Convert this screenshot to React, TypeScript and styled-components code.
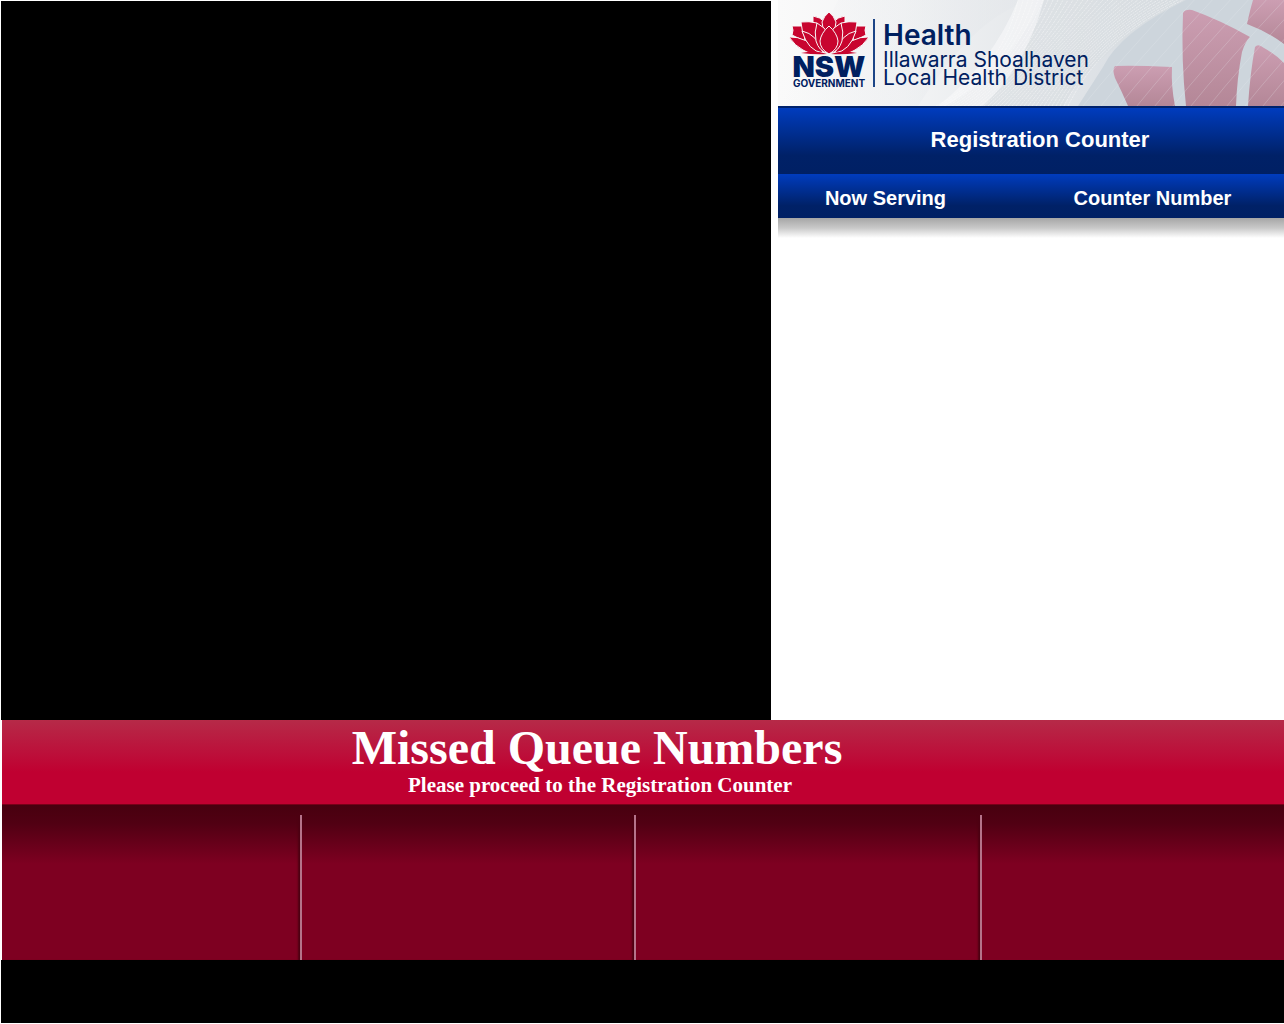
import React from "react";
import styled, { createGlobalStyle } from "styled-components";

const GlobalStyle = createGlobalStyle`
  *, *::before, *::after { box-sizing: border-box; }
  body { margin: 0; background: #fff; }
  h1, h2, p { margin: 0; }
`;

const Page = styled.div`
  min-height: 100vh;
  display: flex;
  flex-direction: column;
  padding: 1px 0 1px 1px;
`;

const Upper = styled.main`
  display: grid;
  grid-template-columns: 770fr 506fr;
  column-gap: 7px;
  flex: 1 0 auto;
`;

const VideoPanel = styled.section`
  background: #000;
`;

const Board = styled.section`
  display: flex;
  flex-direction: column;
  margin-top: -1px;
`;

const Banner = styled.header`
  position: relative;
  display: flex;
  align-items: flex-start;
  height: 106px;
  padding: 12px 0 0 11px;
  overflow: hidden;
  color: #002060;
  font-family: Inter, "Liberation Sans", sans-serif;
  background: #eef0f2;
`;

const BannerArt = styled.svg`
  position: absolute;
  inset: 0;
  width: 100%;
  height: 100%;
`;

const Emblem = styled.div`
  position: relative;
  display: flex;
  flex-direction: column;
  align-items: center;
  width: 80px;
`;

const Flower = styled.svg`
  display: block;
  width: 80px;
  height: 43px;
`;

const StateName = styled.span`
  font-size: 29px;
  font-weight: 900;
  line-height: 24px;
`;

const StateLabel = styled.span`
  font-size: 10px;
  font-weight: 700;
  line-height: 8px;
`;

const District = styled.div`
  position: relative;
  margin: 7px 0 0 4px;
  padding-left: 8px;
  height: 68px;
  border-left: 2px solid #1c4587;
`;

const DistrictName = styled.h1`
  font-size: 28px;
  font-weight: 600;
  line-height: 32px;
`;

const DistrictLine = styled.p`
  font-size: 21px;
  font-weight: 400;
  line-height: 18px;
  white-space: nowrap;
`;

const BlueBar = styled.div<{ $tall?: boolean }>`
  display: grid;
  grid-auto-flow: column;
  grid-auto-columns: 1fr;
  align-items: center;
  justify-items: center;
  height: ${(p) => (p.$tall ? 68 : 44)}px;
  border-top: ${(p) => (p.$tall ? "2px solid #00226c" : "0")};
  padding-left: ${(p) => (p.$tall ? 18 : 0)}px;
  padding-bottom: ${(p) => (p.$tall ? 2 : 0)}px;
  background: linear-gradient(#003cbe, #002167 72%, #002064);
  color: #fff;
  font-family: "Liberation Sans", Arial, sans-serif;
`;

const CounterTitle = styled.h2`
  font-size: 22px;
  font-weight: 700;
  line-height: 28px;
`;

const ColumnTitle = styled.span<{ $side: "left" | "right" }>`
  font-size: 20px;
  font-weight: 700;
  line-height: 24px;
  padding: ${(p) => (p.$side === "left" ? "4px 38px 0 0" : "4px 10px 0 0")};
`;

const Shade = styled.div`
  height: 20px;
  background: linear-gradient(#a6a6a6, #c9c9c9 50%, #fff);
`;

const Missed = styled.section`
  margin-left: 1px;
`;

const MissedHead = styled.header`
  display: flex;
  flex-direction: column;
  align-items: center;
  height: 84px;
  padding-right: 86px;
  color: #fff;
  font-family: "Liberation Serif", "Times New Roman", serif;
  background: linear-gradient(#b62a48, #bd0c38 45%, #c00031 62%);
`;

const MissedTitle = styled.h2`
  padding-right: 6px;
  font-size: 48px;
  font-weight: 700;
  line-height: 55px;
`;

const MissedText = styled.p`
  font-size: 21px;
  font-weight: 700;
  line-height: 20px;
`;

const Slots = styled.div`
  display: grid;
  grid-template-columns: 300fr 334fr 346fr 302fr;
  height: 156px;
  padding-top: 10px;
  border-top: 1px solid #780018;
  background: linear-gradient(#48000f, #510013 12%, #7e0021 38%);
`;

const Slot = styled.div`
  border-right: 2px solid #b5738a;
  box-shadow: inset -3px 0 2px -1px #4c0012;

  &:last-child {
    border-right: 0;
    box-shadow: none;
  }
`;

const Ticker = styled.footer`
  height: 63px;
  background: #000;
`;

const lines = Array.from({ length: 34 }, (_, i) => i);

function BannerBackground() {
  return (
    <BannerArt viewBox="0 0 506 106" preserveAspectRatio="none" aria-hidden="true">
      <defs>
        <linearGradient id="sky" x1="0" x2="1" y1="0" y2="0">
          <stop offset="0" stopColor="#fafafa" />
          <stop offset=".25" stopColor="#f3f4f5" />
          <stop offset=".6" stopColor="#dfe3e7" />
          <stop offset="1" stopColor="#c9d1d9" />
        </linearGradient>
        <linearGradient id="petal" x1="0" x2="0" y1="0" y2="1">
          <stop offset="0" stopColor="#cc9eb2" />
          <stop offset="1" stopColor="#b48797" />
        </linearGradient>
        <linearGradient id="veil" x1="0" x2="1" y1="0" y2="0">
          <stop offset="0" stopColor="#e6e9ec" stopOpacity="0" />
          <stop offset="1" stopColor="#e3e6ea" />
        </linearGradient>
      </defs>
      <path d="M0 0H506V106H0Z" fill="url(#sky)" />
      <path d="M60 0H250C200 20 170 60 140 106H0C30 70 45 30 60 0Z" fill="url(#veil)" opacity=".5" />
      <path d="M265 0H420Q365 22 330 53Q300 78 285 106H168Q230 70 265 0Z" fill="#d9dde1" opacity=".6" />
      <path d="M240 0H266Q248 66 205 106H160Q215 62 240 0Z" fill="#f8f9fa" opacity=".6" />
      <path d="M408 0Q342 32 325 67L300 106H506V0Z" fill="#cdd5dc" />
      <g fill="none" stroke="#fff" strokeWidth="1" strokeDasharray="2 1" opacity=".5">
        {lines.map((i) => (
          <path key={i} d={`M${158 + i * 4} 106Q${225 + i * 3} ${70 - i} ${240 + i * 5} 0`} />
        ))}
      </g>
      <g fill="url(#petal)">
        <path d="M337 66Q354 65 394 67Q393 86 397 106H350Q344 92 337 78Q334 69 337 66Z" />
        <path d="M405 13Q407 9 414 10Q442 20 472 37Q467 42 464 52Q459 78 458 106H408Q403 60 405 13Z" />
        <path d="M475 0H506V44Q490 32 469 24Q472 10 475 0Z" />
        <path d="M477 47Q480 43 486 48Q497 54 506 63V106H470Q472 74 477 47Z" />
      </g>
      <g fill="none" stroke="#eef2f5" strokeWidth="1" opacity=".22">
        {lines.slice(0, 13).map((i) => (
          <path key={i} d={`M${300 + i * 18} 112Q${340 + i * 18} 62 ${402 + i * 18} -4`} />
        ))}
      </g>
    </BannerArt>
  );
}

function Waratah() {
  return (
    <Flower viewBox="0 0 80 43" aria-hidden="true">
      <g fill="#c8052f" stroke="#fafafa" strokeWidth="1" strokeLinejoin="round">
        <path d="M3 14H14L16 29L7 25L3 23Q5 18 3 14Z" />
        <path d="M77 14H66L64 29L73 25L77 23Q75 18 77 14Z" />
        <path d="M24 4Q31 5 36 10L38 26L24 24Z" />
        <path d="M56 4Q49 5 44 10L42 26L56 24Z" />
        <path d="M40 0Q45 4 47 10L45 22H35L33 10Q35 4 40 0Z" />
        <path d="M12 10Q20 9 28 11L30 34L18 30Q12 20 12 10Z" />
        <path d="M68 10Q60 9 52 11L50 34L62 30Q68 20 68 10Z" />
        <path d="M0 25Q17 24 32 41Q22 43 14 38Q6 34 0 25Z" />
        <path d="M80 25Q63 24 48 41Q58 43 66 38Q74 34 80 25Z" />
        <path d="M13 19Q28 22 34 41Q19 39 13 19Z" />
        <path d="M67 19Q52 22 46 41Q61 39 67 19Z" />
        <path d="M28 11Q36 15 40 23L38 41Q30 39 27 29Q25 20 28 11Z" />
        <path d="M52 11Q44 15 40 23L42 41Q50 39 53 29Q55 20 52 11Z" />
        <path d="M40 14Q48 21 49 29Q49 37 40 42Q31 37 31 29Q32 21 40 14Z" />
      </g>
      <path d="M12 41Q27 38 38 42Q27 43 12 41ZM68 41Q53 38 42 42Q53 43 68 41Z" fill="#c8052f" />
    </Flower>
  );
}

export default function App() {
  return (
    <Page>
      <GlobalStyle />
      <Upper>
        <VideoPanel aria-label="Video" />
        <Board>
          <Banner>
            <BannerBackground />
            <Emblem>
              <Waratah />
              <StateName>NSW</StateName>
              <StateLabel>GOVERNMENT</StateLabel>
            </Emblem>
            <District>
              <DistrictName>Health</DistrictName>
              <DistrictLine>Illawarra Shoalhaven</DistrictLine>
              <DistrictLine>Local Health District</DistrictLine>
            </District>
          </Banner>
          <BlueBar $tall>
            <CounterTitle>Registration Counter</CounterTitle>
          </BlueBar>
          <BlueBar>
            <ColumnTitle $side="left">Now Serving</ColumnTitle>
            <ColumnTitle $side="right">Counter Number</ColumnTitle>
          </BlueBar>
          <Shade />
        </Board>
      </Upper>
      <Missed>
        <MissedHead>
          <MissedTitle>Missed Queue Numbers</MissedTitle>
          <MissedText>Please proceed to the Registration Counter</MissedText>
        </MissedHead>
        <Slots>
          <Slot />
          <Slot />
          <Slot />
          <Slot />
        </Slots>
      </Missed>
      <Ticker />
    </Page>
  );
}
